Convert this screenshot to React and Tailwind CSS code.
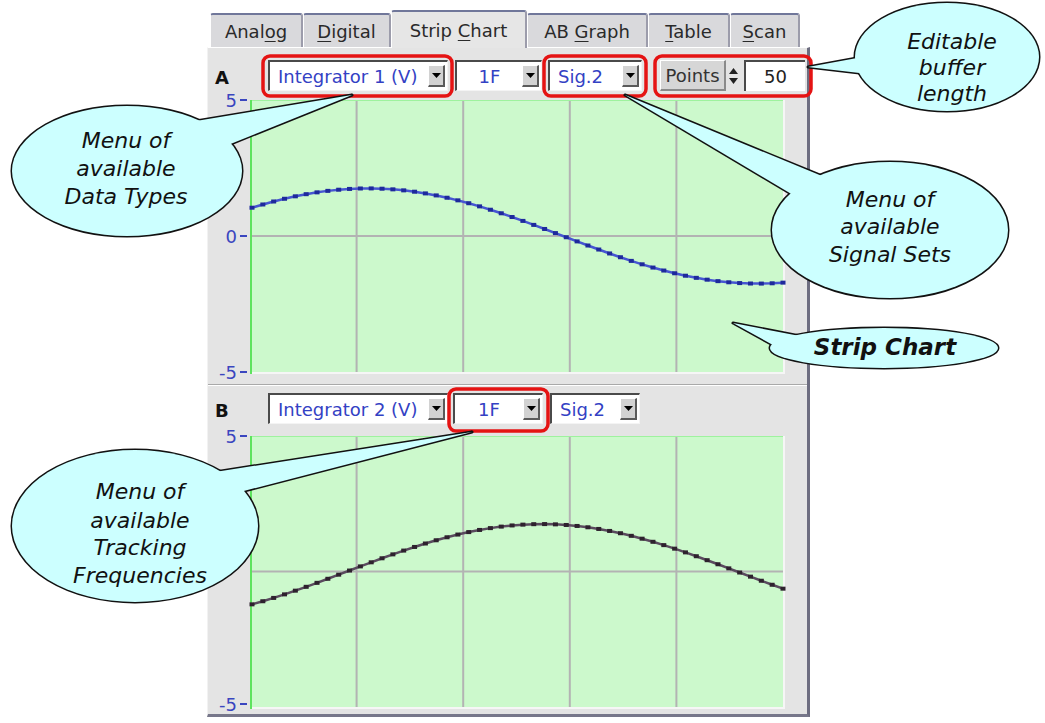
import React from 'react'

const FONT = { fontFamily: '"DejaVu Sans", "Liberation Sans", sans-serif' }

const TABS = [
  { label: 'Analog', u: 4, w: 'w-[93px]' },
  { label: 'Digital', u: 0, w: 'w-[88px]' },
  { label: 'Strip Chart', u: 6, w: 'w-[136px]', active: true },
  { label: 'AB Graph', u: 3, w: 'w-[121px]' },
  { label: 'Table', u: 0, w: 'w-[82px]' },
  { label: 'Scan', u: 0, w: 'w-[70px]' },
]

function TabStrip() {
  return (
    <div className="h-[37px] pl-[3px] flex items-end">
      {TABS.map(t => (
        <div
          key={t.label}
          className={`${t.w} flex items-center justify-center text-[18px] text-[#2a2a2a] border-l border-l-white border-r-2 border-r-[#9c9cab] border-t-2 border-t-[#70779a] rounded-t-[3px] ${
            t.active ? 'h-[38px] -mb-px relative z-10 bg-[#e6e6e6]' : 'h-[34px] bg-[#d9d9dc]'
          }`}
        >
          <span>
            {t.label.slice(0, t.u)}
            <span className="underline underline-offset-[3px]">{t.label[t.u]}</span>
            {t.label.slice(t.u + 1)}
          </span>
        </div>
      ))}
    </div>
  )
}

function Arrow() {
  return (
    <div className="w-[17px] my-[3px] mr-[2px] bg-[#d2d2d2] border-t border-l border-white border-b-2 border-r-2 border-b-[#5a5a5a] border-r-[#5a5a5a] flex items-center justify-center">
      <svg width="9" height="5"><path d="M0 0H9L4.5 5Z" fill="#000" /></svg>
    </div>
  )
}

function Combo({ text, w, center }) {
  return (
    <div className={`${w} h-[31px] flex bg-white border-t-2 border-l-2 border-t-[#4a4a4a] border-l-[#4a4a4a] border-b border-r border-b-[#f4f4f4] border-r-[#f4f4f4]`}>
      <div className={`flex-1 flex items-center text-[18px] text-[#3341c4] ${center ? 'justify-center' : 'pl-[8px]'}`}>
        {text}
      </div>
      <Arrow />
    </div>
  )
}

function PointsBox() {
  return (
    <div className="ml-[18px] h-[31px] flex">
      <div className="w-[66px] bg-[#d6d6d6] border-t border-l border-white border-b-2 border-r-2 border-b-[#8a8a8a] border-r-[#8a8a8a] flex items-center justify-center text-[18px] text-[#333]">
        Points
      </div>
      <div className="w-[15px] flex flex-col items-center justify-center gap-[4px]">
        <svg width="9" height="6"><path d="M0 6H9L4.5 0Z" fill="#222" /></svg>
        <svg width="9" height="6"><path d="M0 0H9L4.5 6Z" fill="#222" /></svg>
      </div>
      <div className="ml-[3px] w-[61px] bg-white border-t-2 border-l-2 border-t-[#4a4a4a] border-l-[#4a4a4a] flex items-center justify-center text-[18px] text-[#222]">
        50
      </div>
    </div>
  )
}

const vA = px => 1.75 * Math.cos((2 * Math.PI * (px - 118)) / 780)
const vB = px => 1.75 * Math.cos((2 * Math.PI * (px - 292)) / 780)

// plot area: green box from gT to gBot, labels hang over the edges
function Chart({ H, gT, gBot, fn, line, dot, zero }) {
  const gL = 42, gR = 575
  const mid = (gT + gBot) / 2
  const k = (gBot - gT) / 10
  const pts = Array.from({ length: 50 }, (_, i) => {
    const px = 2 + i * (531 / 49)
    return [gL + px, mid - fn(px) * k]
  })
  const label = (txt, y) => (
    <g key={txt}>
      <text x="29" y={y} textAnchor="end" dominantBaseline="central" fontSize="18" fill="#3a46bf" style={FONT}>{txt}</text>
      <line x1="32" x2="39" y1={y} y2={y} stroke="#3a46bf" strokeWidth="2" />
    </g>
  )
  return (
    <svg width="599" height={H} className="block">
      <rect x={gL} y={gT} width={gR - gL} height={gBot - gT} fill="#ccf9cc" />
      {[1, 2, 3, 4].map(i => {
        const x = gL + ((gR - gL) * i) / 5
        return <line key={i} x1={x} x2={x} y1={gT} y2={gBot} stroke="#b3b3b3" strokeWidth="2" />
      })}
      <line x1={gL} x2={gR} y1={mid} y2={mid} stroke="#b3b3b3" strokeWidth="2" />
      <line x1={gL} x2={gR} y1={gT + 0.5} y2={gT + 0.5} stroke="#9ef29e" strokeWidth="1" />
      <line x1={gR + 1} x2={gR + 1} y1={gT} y2={gBot + 1} stroke="#f6f6f6" strokeWidth="2" />
      <line x1={gL} x2={gR + 2} y1={gBot + 1} y2={gBot + 1} stroke="#f6f6f6" strokeWidth="2" />
      <line x1={gL + 1} x2={gL + 1} y1={gT} y2={gBot + 2} stroke="#5ee35e" strokeWidth="2" />
      {label('5', gT)}
      {zero && label('0', mid)}
      {label('-5', Math.min(gBot, H - 10))}
      <polyline points={pts.map(p => p.join(',')).join(' ')} fill="none" stroke={line} strokeWidth="2.5" />
      {pts.map(([x, y], i) => (
        <rect key={i} x={x - 2.5} y={y - 2} width="5" height="4" fill={dot} />
      ))}
    </svg>
  )
}

function Bubble({ cx, cy, rx, ry, tail }) {
  const pts = tail.map(p => p.join(',')).join(' ')
  return (
    <g>
      <ellipse cx={cx} cy={cy} rx={rx} ry={ry} fill="#ccffff" stroke="#111" strokeWidth="3" />
      <polygon points={pts} fill="#ccffff" stroke="#111" strokeWidth="3" strokeLinejoin="round" />
      <ellipse cx={cx} cy={cy} rx={rx} ry={ry} fill="#ccffff" />
      <polygon points={pts} fill="#ccffff" />
    </g>
  )
}

function Lines({ x, ys, lines, bold, size = 22 }) {
  return lines.map((l, i) => (
    <text
      key={i}
      x={x}
      y={ys[i]}
      textAnchor="middle"
      dominantBaseline="central"
      fontSize={size}
      fontStyle="italic"
      fontWeight={bold ? 700 : 200}
      fill="#111"
      style={FONT}
    >
      {l}
    </text>
  ))
}

function Callouts() {
  return (
    <svg width="1045" height="723" className="absolute inset-0 pointer-events-none">
      <rect x="263" y="56" width="189" height="40" rx="7" fill="none" stroke="#e51313" strokeWidth="3.5" />
      <rect x="544" y="56" width="102" height="40" rx="7" fill="none" stroke="#e51313" strokeWidth="3.5" />
      <rect x="655" y="56" width="156" height="40" rx="7" fill="none" stroke="#e51313" strokeWidth="3.5" />
      <rect x="449" y="389" width="99" height="42" rx="7" fill="none" stroke="#e51313" strokeWidth="3.5" />

      <Bubble cx={127} cy={171} rx={115} ry={65} tail={[[190, 122], [228, 145], [352, 95]]} />
      <Lines x={126} ys={[140, 168, 196]} lines={['Menu of', 'available', 'Data Types']} />

      <Bubble cx={947} cy={57} rx={92} ry={54} tail={[[868, 56], [868, 74], [808, 67]]} />
      <Lines x={952} ys={[41, 67, 93]} lines={['Editable', 'buffer', 'length']} />

      <Bubble cx={890} cy={230} rx={118} ry={68} tail={[[625, 95], [822, 176], [793, 195]]} />
      <Lines x={890} ys={[199, 226, 254]} lines={['Menu of', 'available', 'Signal Sets']} />

      <Bubble cx={884} cy={348} rx={114} ry={20} tail={[[733, 323], [805, 337], [782, 350]]} />
      <Lines x={885} ys={[347]} lines={['Strip Chart']} bold size={23} />

      <Bubble cx={135} cy={526} rx={123} ry={76} tail={[[215, 472], [240, 492], [472, 432]]} />
      <Lines x={140} ys={[491, 520, 547, 575]} lines={['Menu of', 'available', 'Tracking', 'Frequencies']} />
    </svg>
  )
}

export default function App() {
  return (
    <div className="relative w-[1045px] h-[723px] bg-white overflow-hidden" style={FONT}>
      <div className="pt-[10px] pl-[207px]">
        <div className="w-[603px]">
          <TabStrip />
          <div className="bg-[#e4e4e4] border-l border-t border-l-[#f2f2f2] border-t-white border-r-[3px] border-r-[#6d6d80] border-b-[3px] border-b-[#77778a]">
            <div className="h-[40px] pt-[12px] flex">
              <div className="w-[60px] pl-[7px] pt-[4px] text-[18px] font-bold text-[#111]">A</div>
              <Combo text="Integrator 1 (V)" w="w-[180px]" />
              <div className="ml-[7px]"><Combo text="1F" w="w-[87px]" center /></div>
              <div className="ml-[6px]"><Combo text="Sig.2" w="w-[94px]" /></div>
              <PointsBox />
            </div>
            <Chart H={296} gT={12} gBot={284} fn={vA} line="#4655d2" dot="#1e2a9c" zero />
            <div className="h-[2px] border-t border-t-[#a9a9a9] border-b border-b-white" />
            <div className="h-[38px] pt-[7px] flex">
              <div className="w-[60px] pl-[7px] pt-[4px] text-[18px] font-bold text-[#111]">B</div>
              <Combo text="Integrator 2 (V)" w="w-[180px]" />
              <div className="ml-[5px]"><Combo text="1F" w="w-[90px]" center /></div>
              <div className="ml-[7px]"><Combo text="Sig.2" w="w-[90px]" /></div>
            </div>
            <Chart H={290} gT={12} gBot={283} fn={vB} line="#5a4a5e" dot="#2e222e" />
          </div>
        </div>
      </div>
      <Callouts />
    </div>
  )
}
